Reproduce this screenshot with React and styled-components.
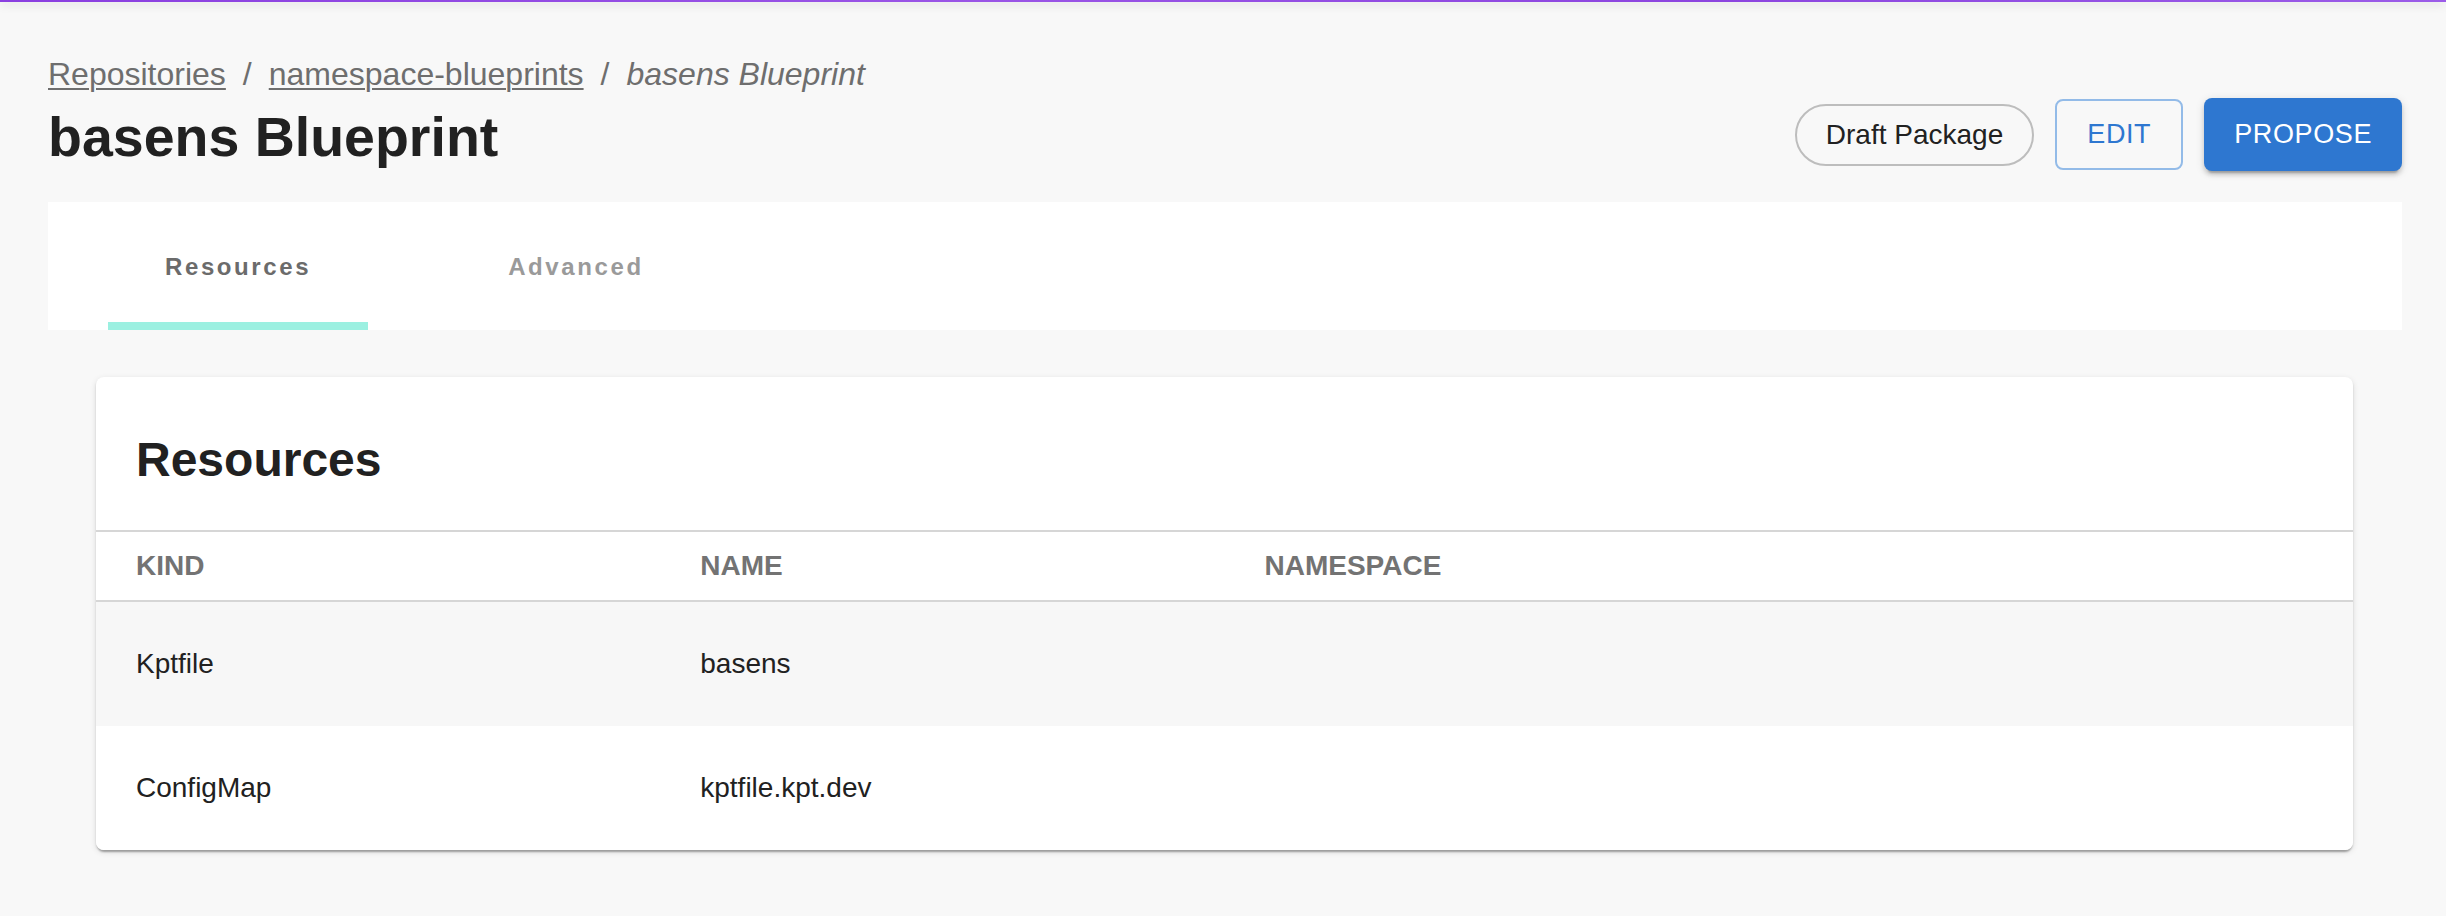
import React from 'react';
import styled, { createGlobalStyle } from 'styled-components';

const GlobalStyle = createGlobalStyle`
  body {
    margin: 0;
    background: #f8f8f8;
    font-family: "Liberation Sans", Arial, sans-serif;
    color: #212121;
  }
  * { box-sizing: border-box; }
`;

const TopBar = styled.div`
  height: 2px;
  background: linear-gradient(90deg, #8a3fe0 0%, #9a55e6 40%, #8c45df 70%, #9b5ce8 100%);
  box-shadow: 0 2px 10px rgba(0, 0, 0, 0.22);
  position: relative;
  z-index: 1;
`;

const Page = styled.div`
  padding: 54px 44px 48px 48px;
`;

const Crumbs = styled.nav`
  display: flex;
  align-items: center;
  height: 36px;
  font-size: 32px;
  line-height: 36px;
  color: #6e6e6e;
  margin-bottom: 6px;
`;

const CrumbLink = styled.a`
  color: #6e6e6e;
  text-decoration: underline;
  text-underline-offset: 3px;
  text-decoration-thickness: 2px;
`;

const Sep = styled.span`
  margin: 0 17px;
`;

const Current = styled.span`
  font-style: italic;
`;

const TitleRow = styled.div`
  display: flex;
  align-items: center;
  justify-content: space-between;
  height: 73px;
`;

const Title = styled.h1`
  margin: 0;
  padding-top: 4px;
  font-size: 55.5px;
  line-height: 64px;
  font-weight: 700;
  color: #212121;
`;

const Actions = styled.div`
  display: flex;
  align-items: center;
  gap: 21px;
`;

const Chip = styled.div`
  height: 62px;
  padding: 0 29px;
  border: 2px solid #bdbdbd;
  border-radius: 31px;
  display: flex;
  align-items: center;
  font-size: 28px;
  color: #212121;
`;

const Button = styled.button`
  height: ${p => (p.$primary ? 73 : 71)}px;
  min-width: 128px;
  padding: 0 ${p => (p.$primary ? 30 : 30)}px;
  border-radius: 8px;
  font-family: inherit;
  font-size: 27px;
  font-weight: 500;
  letter-spacing: 0.6px;
  text-transform: uppercase;
  border: ${p => (p.$primary ? 'none' : '2px solid #93bbe8')};
  background: ${p => (p.$primary ? '#2e77d0' : 'transparent')};
  color: ${p => (p.$primary ? '#ffffff' : '#2e77d0')};
  box-shadow: ${p =>
    p.$primary
      ? '0 6px 2px -4px rgba(0,0,0,0.2), 0 4px 4px rgba(0,0,0,0.14), 0 2px 10px rgba(0,0,0,0.12)'
      : 'none'};
`;

const TabBar = styled.div`
  margin-top: 31px;
  height: 128px;
  background: #ffffff;
  display: flex;
  padding-left: 60px;
  gap: 83px;
`;

const Tab = styled.div`
  height: 128px;
  padding: 53px 57px 0;
  font-size: 24px;
  line-height: 24px;
  font-weight: 700;
  letter-spacing: 2.6px;
  color: ${p => (p.$active ? '#6b6b6b' : '#9a9a9a')};
  border-bottom: 8px solid ${p => (p.$active ? '#9bf0e1' : 'transparent')};
`;

const Content = styled.div`
  padding: 47px 49px 0 48px;
`;

const Card = styled.div`
  background: #ffffff;
  border-radius: 8px;
  overflow: hidden;
  box-shadow: 0 4px 2px -2px rgba(0, 0, 0, 0.2), 0 2px 2px rgba(0, 0, 0, 0.14),
    0 2px 6px rgba(0, 0, 0, 0.12);
`;

const CardTitle = styled.h2`
  margin: 0;
  padding: 55px 40px 42px;
  font-size: 48px;
  line-height: 56px;
  font-weight: 700;
  color: #212121;
`;

const Row = styled.div`
  display: grid;
  grid-template-columns: repeat(4, 1fr);
  align-items: center;
  height: ${p => (p.$head ? 72 : 124)}px;
  background: ${p => (p.$shade ? '#f7f7f7' : '#ffffff')};
  border-top: ${p => (p.$head ? '2px solid #d6d6d6' : 'none')};
  border-bottom: ${p => (p.$head ? '2px solid #d6d6d6' : 'none')};
`;

const HeadCell = styled.div`
  padding-left: 40px;
  font-size: 28px;
  font-weight: 700;
  color: #737373;
  text-transform: uppercase;
`;

const Cell = styled.div`
  padding-left: 40px;
  font-size: 28px;
  color: #212121;
`;

const resources = [
  { kind: 'Kptfile', name: 'basens', namespace: '' },
  { kind: 'ConfigMap', name: 'kptfile.kpt.dev', namespace: '' },
];

export default function App() {
  return (
    <>
      <GlobalStyle />
      <TopBar />
      <Page>
        <Crumbs>
          <CrumbLink>Repositories</CrumbLink>
          <Sep>/</Sep>
          <CrumbLink>namespace-blueprints</CrumbLink>
          <Sep>/</Sep>
          <Current>basens Blueprint</Current>
        </Crumbs>
        <TitleRow>
          <Title>basens Blueprint</Title>
          <Actions>
            <Chip>Draft Package</Chip>
            <Button>Edit</Button>
            <Button $primary>Propose</Button>
          </Actions>
        </TitleRow>
        <TabBar>
          <Tab $active>Resources</Tab>
          <Tab>Advanced</Tab>
        </TabBar>
        <Content>
          <Card>
            <CardTitle>Resources</CardTitle>
            <Row $head>
              <HeadCell>Kind</HeadCell>
              <HeadCell>Name</HeadCell>
              <HeadCell>Namespace</HeadCell>
              <HeadCell />
            </Row>
            {resources.map((r, i) => (
              <Row key={r.kind} $shade={i % 2 === 0}>
                <Cell>{r.kind}</Cell>
                <Cell>{r.name}</Cell>
                <Cell>{r.namespace}</Cell>
                <Cell />
              </Row>
            ))}
          </Card>
        </Content>
      </Page>
    </>
  );
}
